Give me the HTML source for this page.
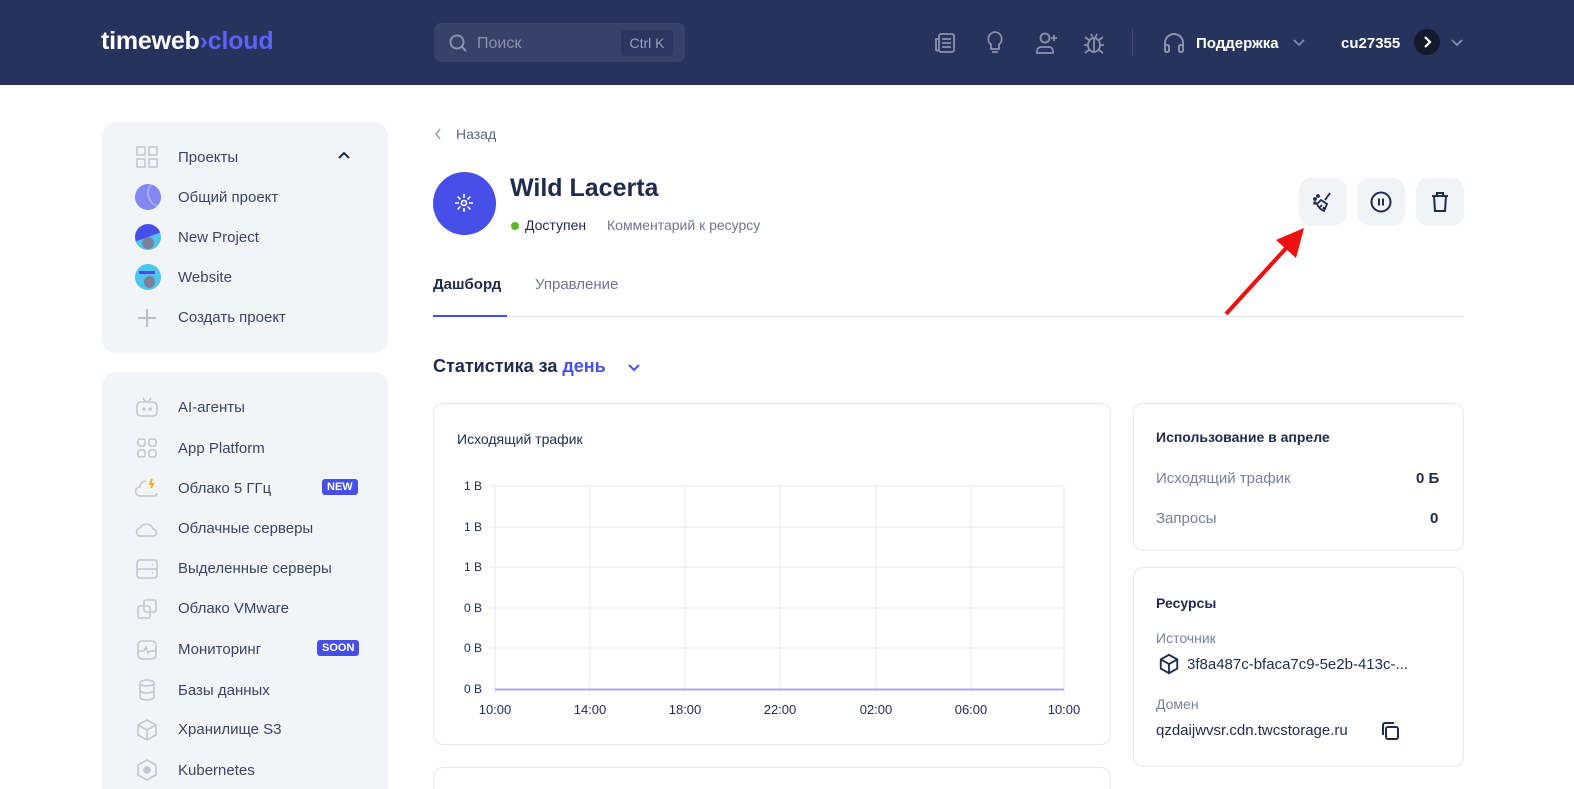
<!DOCTYPE html>
<html style="width:1574px;height:789px;overflow:hidden"><head><meta charset="utf-8"><style>
*{box-sizing:border-box;margin:0;padding:0}
body{width:1574px;height:789px;overflow:hidden;background:#fff;font-family:"Liberation Sans","Noto Sans CJK SC",sans-serif;color:#1f2a4d;position:relative}
.hdr{position:absolute;left:0;top:0;width:1574px;height:85px;background:#27325d}
.abs{position:absolute}
.card{position:absolute;background:#f3f4f7;border-radius:14px}
.item{position:absolute;left:178px;font-size:15px;color:#3a4466}
.ic{position:absolute;left:135px}
.badge{position:absolute;left:317px;background:#4650e8;color:#fff;font-size:11px;font-weight:bold;border-radius:3px;padding:2px 5px}
.box{position:absolute;border:1px solid #e6e8ee;border-radius:10px;background:#fff}
.btn{position:absolute;top:178px;width:48px;height:48px;border-radius:12px;background:#f2f3f6}
.yl{position:absolute;font-size:12px;color:#1f2a4d;text-align:right;width:30px;left:452px}
.xl{position:absolute;top:702px;font-size:13px;color:#1f2a4d;width:60px;text-align:center}
</style></head><body>
<div class="hdr">
 <div class="abs" style="left:101px;top:27px;font-size:25px;font-weight:bold;color:#fff;letter-spacing:-0.2px">timeweb<span style="color:#5b62f5">›cloud</span></div>
 <div class="abs" style="left:434px;top:23px;width:251px;height:39px;border-radius:7px;background:#384268"></div>
 <svg class="abs" style="left:448px;top:33px" width="20" height="20" viewBox="0 0 20 20" fill="none" stroke="#8b92ad" stroke-width="2"><circle cx="9" cy="9" r="6.5"/><path d="M14 14l4 4"/></svg>
 <div class="abs" style="left:477px;top:35px;font-size:16px;color:#8b92ad">Поиск</div>
 <div class="abs" style="left:621px;top:30px;width:52px;height:26px;border-radius:4px;background:#2c365f;color:#9aa1bb;font-size:14px;text-align:center;line-height:26px">Ctrl K</div>
 <svg class="abs" style="left:933px;top:31px" width="24" height="24" viewBox="0 0 24 24" fill="none" stroke="#8b92ad" stroke-width="1.8"><rect x="6" y="3" width="15" height="18" rx="2"/><path d="M6 8H3v11a2 2 0 0 0 3 0M9 8h9M9 12h9M9 16h9"/></svg>
 <svg class="abs" style="left:984px;top:30px" width="22" height="26" viewBox="0 0 22 26" fill="none" stroke="#8b92ad" stroke-width="1.8"><path d="M11 2a7 7 0 0 0-4 12.5V19h8v-4.5A7 7 0 0 0 11 2zM8 22h6"/></svg>
 <svg class="abs" style="left:1034px;top:30px" width="26" height="26" viewBox="0 0 26 26" fill="none" stroke="#8b92ad" stroke-width="1.8"><circle cx="11" cy="8" r="4.5"/><path d="M3 23v-2a4 4 0 0 1 4-4h8a4 4 0 0 1 4 4v2zM20 5v6M17 8h6"/></svg>
 <svg class="abs" style="left:1081px;top:30px" width="26" height="26" viewBox="0 0 26 26" fill="none" stroke="#8b92ad" stroke-width="1.8"><ellipse cx="13" cy="15" rx="6" ry="7"/><path d="M13 8v14M7 15H3M19 15h4M8 10L4 7M18 10l4-3M8 20l-4 3M18 20l4 3M10 4l1.5 3M16 4l-1.5 3"/></svg>
 <div class="abs" style="left:1132px;top:29px;width:1px;height:27px;background:#434c74"></div>
 <svg class="abs" style="left:1161px;top:30px" width="26" height="26" viewBox="0 0 26 26" fill="none" stroke="#8b92ad" stroke-width="2"><path d="M4 20v-7a9 9 0 0 1 18 0v7"/><rect x="4" y="15" width="4" height="7" rx="1.5"/><rect x="18" y="15" width="4" height="7" rx="1.5"/></svg>
 <div class="abs" style="left:1196px;top:35px;font-size:15px;font-weight:bold;color:#fff">Поддержка</div>
 <svg class="abs" style="left:1292px;top:38px" width="14" height="10" viewBox="0 0 14 10" fill="none" stroke="#8b92ad" stroke-width="1.6"><path d="M2 2l5 5 5-5"/></svg>
 <div class="abs" style="left:1341px;top:35px;font-size:15px;font-weight:bold;color:#fff">cu27355</div>
 <div class="abs" style="left:1414px;top:29px;width:26px;height:26px;border-radius:50%;background:#141a2e"></div>
 <svg class="abs" style="left:1421px;top:35px" width="12" height="14" viewBox="0 0 12 14" fill="none" stroke="#fff" stroke-width="2.2"><path d="M4 2l5 5-5 5"/></svg>
 <svg class="abs" style="left:1450px;top:38px" width="14" height="10" viewBox="0 0 14 10" fill="none" stroke="#8b92ad" stroke-width="1.6"><path d="M2 2l5 5 5-5"/></svg>
</div>

<div class="card" style="left:102px;top:122px;width:286px;height:231px"></div>
<svg class="ic" style="top:145px" width="24" height="24" viewBox="0 0 24 24" fill="none" stroke="#c3c7d2" stroke-width="1.6"><rect x="2" y="2" width="8" height="8"/><rect x="14" y="2" width="8" height="8"/><rect x="2" y="14" width="8" height="8"/><rect x="14" y="14" width="8" height="8"/></svg>
<div class="item" style="top:149px">Проекты</div>
<svg class="abs" style="left:336px;top:149px" width="16" height="12" viewBox="0 0 16 12" fill="none" stroke="#1f2a4d" stroke-width="2"><path d="M3 9l5-5 5 5"/></svg>
<div class="abs" style="left:135px;top:184px;width:26px;height:26px;border-radius:50%;background:#8188f0;overflow:hidden"><div style="position:absolute;left:12px;top:-6px;width:30px;height:30px;border-radius:50%;border:2px solid #a7acf5"></div></div>
<div class="item" style="top:189px">Общий проект</div>
<div class="abs" style="left:135px;top:224px;width:26px;height:26px;border-radius:50%;background:linear-gradient(160deg,#4650e8 50%,#4cc6ee 50%);overflow:hidden"><div style="position:absolute;left:7px;top:13px;width:12px;height:12px;border-radius:50%;background:#7c8198"></div></div>
<div class="item" style="top:229px">New Project</div>
<div class="abs" style="left:135px;top:264px;width:26px;height:26px;border-radius:50%;background:#4cc6ee;overflow:hidden"><div style="position:absolute;left:4px;top:7px;width:16px;height:3px;background:#4650e8"></div><div style="position:absolute;left:9px;top:12px;width:11px;height:12px;border-radius:50%;background:#7c8198"></div></div>
<div class="item" style="top:269px">Website</div>
<svg class="ic" style="top:306px" width="24" height="24" viewBox="0 0 24 24" fill="none" stroke="#b5b9c6" stroke-width="1.8"><path d="M12 3v18M3 12h18"/></svg>
<div class="item" style="top:309px">Создать проект</div>

<div class="card" style="left:102px;top:372px;width:286px;height:430px"></div>
<svg class="ic" style="top:396px" width="24" height="22" viewBox="0 0 24 22" fill="none" stroke="#c3c7d2" stroke-width="1.6"><rect x="2" y="6" width="20" height="14" rx="4"/><path d="M8 2l3 4M16 2l-3 4"/><circle cx="9" cy="13" r="1" fill="#c3c7d2"/><circle cx="15" cy="13" r="1" fill="#c3c7d2"/></svg>
<div class="item" style="top:399px">AI-агенты</div>
<svg class="ic" style="top:436px" width="24" height="24" viewBox="0 0 24 24" fill="none" stroke="#c3c7d2" stroke-width="1.6"><rect x="3" y="3" width="7" height="7" rx="2"/><rect x="14" y="3" width="7" height="7" rx="2"/><rect x="3" y="14" width="7" height="7" rx="2"/><rect x="14" y="14" width="7" height="7" rx="2"/></svg>
<div class="item" style="top:440px">App Platform</div>
<svg class="ic" style="top:476px" width="24" height="24" viewBox="0 0 24 24" fill="none" stroke="#c3c7d2" stroke-width="1.6"><path d="M11 5a6 6 0 0 0-6 6 4 4 0 0 0 0 9h14a3 3 0 0 0 3-3"/><path d="M17 3l-2 5h3l-2 4" stroke="#f2b01e" stroke-width="2"/></svg>
<div class="item" style="top:480px">Облако 5 ГГц</div>
<div class="badge" style="top:479px;left:322px">NEW</div>
<svg class="ic" style="top:517px" width="24" height="24" viewBox="0 0 24 24" fill="none" stroke="#c3c7d2" stroke-width="1.6"><path d="M6 19a4 4 0 0 1-1-8 7 7 0 0 1 13 1 3.5 3.5 0 0 1 0 7z"/></svg>
<div class="item" style="top:520px">Облачные серверы</div>
<svg class="ic" style="top:557px" width="24" height="24" viewBox="0 0 24 24" fill="none" stroke="#c3c7d2" stroke-width="1.6"><rect x="2" y="3" width="20" height="18" rx="3"/><path d="M2 12h20M17 8h1M17 16h1"/></svg>
<div class="item" style="top:560px">Выделенные серверы</div>
<svg class="ic" style="top:597px" width="24" height="24" viewBox="0 0 24 24" fill="none" stroke="#c3c7d2" stroke-width="1.6"><rect x="9" y="3" width="12" height="12" rx="2"/><rect x="3" y="9" width="12" height="12" rx="2"/></svg>
<div class="item" style="top:600px">Облако VMware</div>
<svg class="ic" style="top:638px" width="24" height="24" viewBox="0 0 24 24" fill="none" stroke="#c3c7d2" stroke-width="1.6"><rect x="3" y="3" width="18" height="18" rx="4"/><path d="M3 13h6l2-4 2 6 2-2h6"/></svg>
<div class="item" style="top:641px">Мониторинг</div>
<div class="badge" style="top:640px">SOON</div>
<svg class="ic" style="top:678px" width="24" height="24" viewBox="0 0 24 24" fill="none" stroke="#c3c7d2" stroke-width="1.6"><ellipse cx="12" cy="5" rx="7" ry="3"/><path d="M5 5v14c0 1.7 3 3 7 3s7-1.3 7-3V5M5 12c0 1.7 3 3 7 3s7-1.3 7-3"/></svg>
<div class="item" style="top:682px">Базы данных</div>
<svg class="ic" style="top:718px" width="24" height="24" viewBox="0 0 24 24" fill="none" stroke="#c3c7d2" stroke-width="1.6"><path d="M12 2l9 5v10l-9 5-9-5V7zM3 7l9 5 9-5M12 12v10"/></svg>
<div class="item" style="top:721px">Хранилище S3</div>
<svg class="ic" style="top:758px" width="24" height="24" viewBox="0 0 24 24" fill="none" stroke="#c3c7d2" stroke-width="1.6"><path d="M12 2l9 5v10l-9 5-9-5V7z"/><circle cx="12" cy="12" r="3" fill="#c3c7d2"/></svg>
<div class="item" style="top:762px">Kubernetes</div>

<svg class="abs" style="left:433px;top:127px" width="10" height="14" viewBox="0 0 10 14" fill="none" stroke="#9aa0b3" stroke-width="1.5"><path d="M7 2L3 7l4 5"/></svg>
<div class="abs" style="left:456px;top:126px;font-size:14px;color:#5c6480">Назад</div>
<div class="abs" style="left:433px;top:172px;width:63px;height:63px;border-radius:50%;background:#4650e8"></div>
<svg class="abs" style="left:453px;top:192px" width="22" height="22" viewBox="0 0 22 22" fill="none" stroke="#fff" stroke-width="1.6"><circle cx="11" cy="11" r="2.5"/><path d="M11 2v4M11 16v4M2 11h4M16 11h4M4.6 4.6l2.8 2.8M14.6 14.6l2.8 2.8M4.6 17.4l2.8-2.8M14.6 7.4l2.8-2.8"/></svg>
<div class="abs" style="left:510px;top:174px;font-size:25px;font-weight:bold;color:#1f2a4d">Wild Lacerta</div>
<div class="abs" style="left:511px;top:222px;width:8px;height:8px;border-radius:50%;background:#5cb82e"></div>
<div class="abs" style="left:525px;top:217px;font-size:14px;color:#1f2a4d">Доступен</div>
<div class="abs" style="left:607px;top:217px;font-size:14px;color:#6f7690">Комментарий к ресурсу</div>

<div class="btn" style="left:1299px"></div>
<svg class="abs" style="left:1311px;top:190px" width="24" height="24" viewBox="0 0 24 24" fill="none" stroke="#1f2a4d" stroke-width="1.8"><path d="M19 3l-5 7M10 10l6 4-3 7c-3-1-6-4-7-7z M9 17l2-2M12 19l1-2"/><circle cx="4" cy="9" r="1" fill="#1f2a4d"/><circle cx="7" cy="6" r="1" fill="#1f2a4d"/><circle cx="4" cy="13" r="0.8" fill="#1f2a4d"/></svg>
<div class="btn" style="left:1357px"></div>
<svg class="abs" style="left:1369px;top:190px" width="24" height="24" viewBox="0 0 24 24" fill="none" stroke="#1f2a4d" stroke-width="2"><circle cx="12" cy="12" r="9.5"/><path d="M10 8.5v7M14 8.5v7"/></svg>
<div class="btn" style="left:1416px"></div>
<svg class="abs" style="left:1428px;top:190px" width="24" height="24" viewBox="0 0 24 24" fill="none" stroke="#1f2a4d" stroke-width="2"><path d="M4 6h16M9 6V3h6v3M6 6l1 15h10l1-15"/></svg>
<svg class="abs" style="left:1220px;top:222px" width="90" height="96" viewBox="0 0 90 96"><path d="M6 92L68 24" stroke="#f20f0f" stroke-width="4"/><path d="M84 6L56 18l20 18z" fill="#f20f0f"/></svg>

<div class="abs" style="left:433px;top:276px;font-size:15px;font-weight:bold;color:#1f2a4d">Дашборд</div>
<div class="abs" style="left:535px;top:276px;font-size:15px;color:#6f7690">Управление</div>
<div class="abs" style="left:433px;top:316px;width:1031px;height:1px;background:#e6e8ee"></div>
<div class="abs" style="left:433px;top:315px;width:74px;height:2px;background:#4650e8"></div>

<div class="abs" style="left:433px;top:356px;font-size:18px;font-weight:bold;color:#1f2a4d">Статистика за <span style="color:#4650e8">день</span></div>
<svg class="abs" style="left:626px;top:362px" width="16" height="12" viewBox="0 0 16 12" fill="none" stroke="#4650e8" stroke-width="2"><path d="M3 3l5 5 5-5"/></svg>

<div class="box" style="left:433px;top:403px;width:678px;height:342px"></div>
<div class="abs" style="left:457px;top:431px;font-size:14px;color:#1f2a4d">Исходящий трафик</div>
<svg class="abs" style="left:485px;top:480px" width="585" height="220">
<g stroke="#e8e9ef" stroke-width="1">
<path d="M10 6H579M10 47H579M10 87H579M10 128H579M10 168H579"/>
<path d="M10 6V215M105 6V215M200 6V215M295 6V215M391 6V215M486 6V215M579 6V215"/>
<path d="M5 6h5M5 47h5M5 87h5M5 128h5M5 168h5M5 209h5"/>
</g>
<path d="M10 209.5H579" stroke="#a7abf2" stroke-width="2"/>
</svg>
<div class="yl" style="top:479px">1 B</div>
<div class="yl" style="top:520px">1 B</div>
<div class="yl" style="top:560px">1 B</div>
<div class="yl" style="top:601px">0 B</div>
<div class="yl" style="top:641px">0 B</div>
<div class="yl" style="top:682px">0 B</div>
<div class="xl" style="left:465px">10:00</div>
<div class="xl" style="left:560px">14:00</div>
<div class="xl" style="left:655px">18:00</div>
<div class="xl" style="left:750px">22:00</div>
<div class="xl" style="left:846px">02:00</div>
<div class="xl" style="left:941px">06:00</div>
<div class="xl" style="left:1034px">10:00</div>
<div class="box" style="left:433px;top:767px;width:678px;height:60px"></div>

<div class="box" style="left:1133px;top:403px;width:331px;height:148px"></div>
<div class="abs" style="left:1156px;top:429px;font-size:14px;font-weight:bold;color:#1f2a4d">Использование в апреле</div>
<div class="abs" style="left:1156px;top:470px;font-size:15px;color:#7a8198">Исходящий трафик</div>
<div class="abs" style="left:1416px;top:470px;font-size:15px;font-weight:bold;color:#1f2a4d">0 Б</div>
<div class="abs" style="left:1156px;top:510px;font-size:15px;color:#7a8198">Запросы</div>
<div class="abs" style="left:1430px;top:510px;font-size:15px;font-weight:bold;color:#1f2a4d">0</div>

<div class="box" style="left:1133px;top:567px;width:331px;height:200px"></div>
<div class="abs" style="left:1156px;top:595px;font-size:14px;font-weight:bold;color:#1f2a4d">Ресурсы</div>
<div class="abs" style="left:1156px;top:630px;font-size:14px;color:#7a8198">Источник</div>
<svg class="abs" style="left:1158px;top:653px" width="22" height="22" viewBox="0 0 24 24" fill="none" stroke="#1f2a4d" stroke-width="2"><path d="M12 2l9 5v10l-9 5-9-5V7zM3 7l9 5 9-5M12 12v10"/></svg>
<div class="abs" style="left:1187px;top:656px;font-size:15px;color:#1f2a4d">3f8a487c-bfaca7c9-5e2b-413c-...</div>
<div class="abs" style="left:1156px;top:696px;font-size:14px;color:#7a8198">Домен</div>
<div class="abs" style="left:1156px;top:722px;font-size:15px;color:#1f2a4d">qzdaijwvsr.cdn.twcstorage.ru</div>
<svg class="abs" style="left:1379px;top:720px" width="22" height="22" viewBox="0 0 22 22" fill="none" stroke="#1f2a4d" stroke-width="2"><rect x="7" y="7" width="12" height="12" rx="2"/><path d="M4 15V5a2 2 0 0 1 2-2h9"/></svg>
</body></html>
